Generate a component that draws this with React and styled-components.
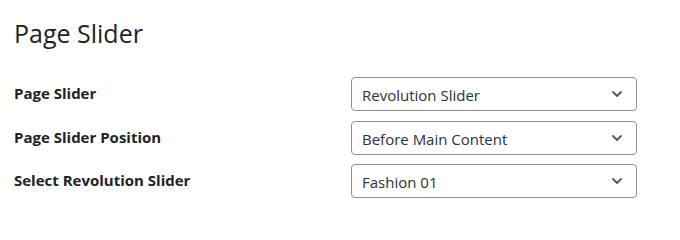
import React from "react";
import styled, { createGlobalStyle } from "styled-components";

const Global = createGlobalStyle`
  html, body { margin: 0; padding: 0; background: #ffffff; }
  body { font-family: "Open Sans", "Noto Sans", Arial, sans-serif; }
`;

const Page = styled.div`
  padding: 16px 14px 0 14px;
  width: 680px;
  box-sizing: border-box;
`;

const Title = styled.h2`
  margin: 0 0 27px 0;
  font-size: 25px;
  line-height: 34px;
  font-weight: 400;
  color: #1d2327;
`;

const Form = styled.div`
  display: flex;
  flex-direction: column;
  gap: 9.5px;
`;

const Row = styled.div`
  display: flex;
  align-items: center;
  height: 34px;
`;

const Label = styled.div`
  width: 337px;
  flex: none;
  font-size: 15px;
  font-weight: 700;
  color: #1d2327;
  margin-top: -2px;
`;

const SelectBox = styled.div`
  width: 286px;
  height: 34px;
  box-sizing: border-box;
  border: 1px solid #8c8f94;
  border-radius: 4px;
  display: flex;
  align-items: center;
  justify-content: space-between;
  padding: 2px 14px 0 10px;
  font-size: 15px;
  color: #2c3338;
  background: #fff;
`;

const Chevron = () => (
  <svg width="10" height="6" viewBox="0 0 10 6" fill="none" style={{ marginTop: -2 }}>
    <path d="M1 1 L5 5 L9 1" stroke="#50575e" strokeWidth="1.8" strokeLinecap="round" strokeLinejoin="round" />
  </svg>
);

const rows = [
  ["Page Slider", "Revolution Slider"],
  ["Page Slider Position", "Before Main Content"],
  ["Select Revolution Slider", "Fashion 01"],
];

export default function App() {
  return (
    <Page>
      <Global />
      <Title>Page Slider</Title>
      <Form>
        {rows.map(([label, value]) => (
          <Row key={label}>
            <Label>{label}</Label>
            <SelectBox>
              <span>{value}</span>
              <Chevron />
            </SelectBox>
          </Row>
        ))}
      </Form>
    </Page>
  );
}
